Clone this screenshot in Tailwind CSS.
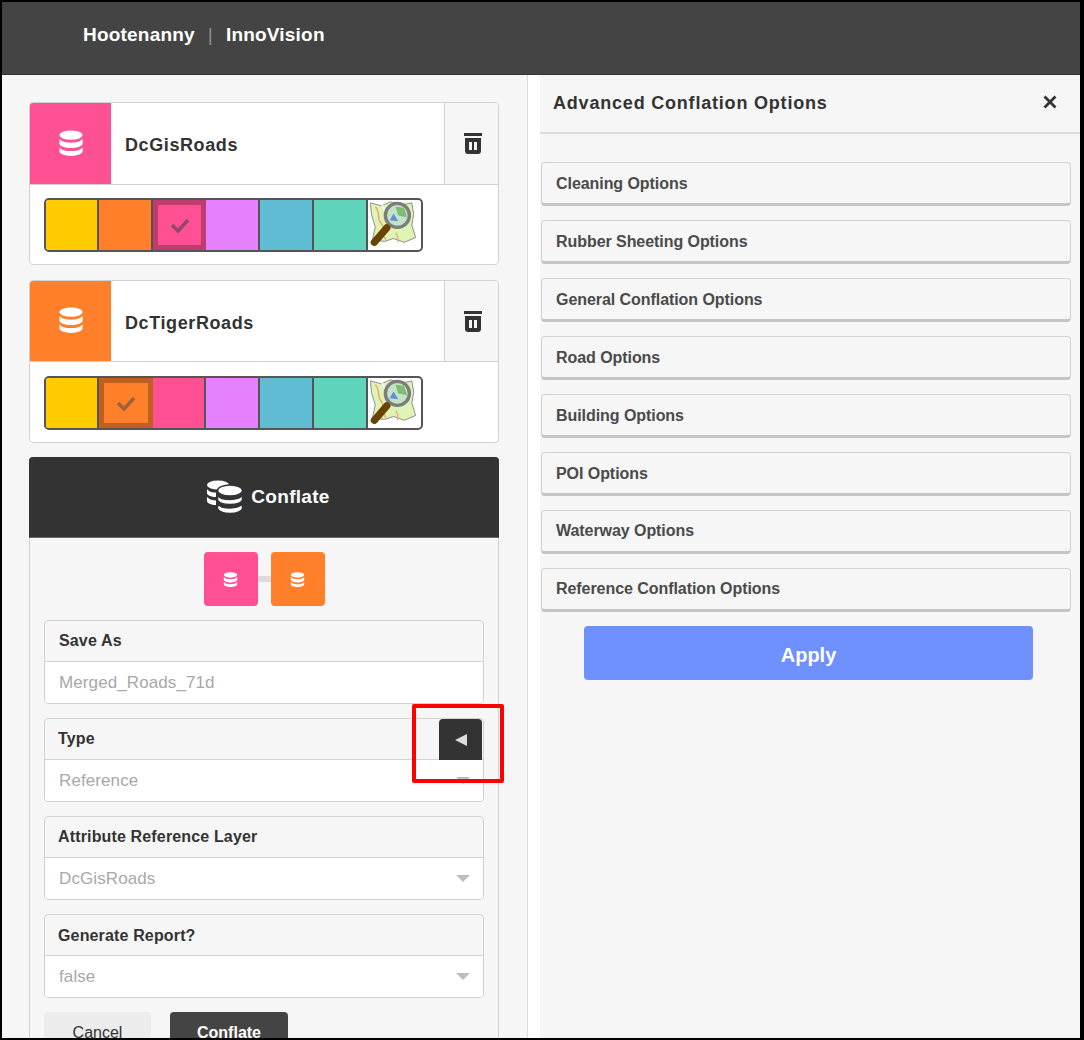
<!DOCTYPE html>
<html lang="en">
<head>
  <meta charset="UTF-8" />
  <title>Hootenanny | InnoVision</title>
  <script src="https://cdn.jsdelivr.net/npm/@tailwindcss/browser@4"></script>
</head>
<body class="bg-black font-['Liberation_Sans',Arial,sans-serif]">
  <svg class="hidden">
    <symbol id="db" viewBox="0 0 28 28">
      <ellipse cx="14" cy="5.500" rx="12.500" ry="5" fill="currentColor"/>
      <path d="M1.500 9.500c2 3 7 4.200 12.500 4.200s10.500-1.200 12.500-4.200v5c0 2.800-5.600 5-12.500 5s-12.500-2.200-12.500-5z" fill="currentColor"/>
      <path d="M1.500 18.500c2 3 7 4.200 12.500 4.200s10.500-1.200 12.500-4.200v4.500c0 2.800-5.600 5-12.500 5s-12.500-2.200-12.500-5z" fill="currentColor"/>
    </symbol>
    <symbol id="osm" viewBox="0 0 54 52">
      <path d="M2 3l11 3 10-4 12 3 10-2 2 12-2 11 4 13-12 5-11-4-9 3-13-1 3-14-4-13z" fill="#dff3b4" stroke="#8a8a8a" stroke-width="1"/>
      <path d="M7 7c6 6 1 12 6 17s-1 10 5 17" fill="none" stroke="#e8a878" stroke-width="1.500"/>
      <path d="M28 34c3 3 3 6 2 10" fill="none" stroke="#e8b088" stroke-width="1.500"/>
      <path d="M14 4c1 6 4 9 7 12" fill="none" stroke="#f4f4f4" stroke-width="2"/>
      <circle cx="30" cy="16" r="12.500" fill="#c4e3c6" stroke="#7d7d7d" stroke-width="3.500"/>
      <path d="M28 7l9 1 3 10-9-2z" fill="#7cbd74"/>
      <path d="M22 21l4-7 5 8z" fill="#5f8fd8"/>
      <path d="M19 29L6 44" stroke="#6b4300" stroke-width="7.500" stroke-linecap="round"/>
    </symbol>
    <symbol id="trash" viewBox="0 0 18 21">
      <path d="M0 0h18v3H0zM1 5h16v13a3 3 0 0 1-3 3H4a3 3 0 0 1-3-3zM5 9v8h3V9zm5 0v8h3V9z" fill="#333" fill-rule="evenodd"/>
    </symbol>
  </svg>

  <div class="m-[2px] w-[1078px] h-[1036px] bg-[#f6f6f6] flex flex-col overflow-hidden relative">
    <header class="h-[73px] shrink-0 bg-[#444444] border-b border-[#333] flex items-center pl-[81px] pb-[5px] text-white font-bold text-[19px] tracking-[0.2px]">
      <span>Hootenanny</span><span class="mx-[13px] font-normal text-[#8f8f8f]">|</span><span>InnoVision</span>
    </header>

    <main class="flex flex-1 min-h-0">
      <!-- left column -->
      <section class="w-[526px] shrink-0 border-r border-[#dcdcdc] pl-[27px] pr-[28px] pt-[27px] flex flex-col gap-[14px]">
        <div class="h-[163px] mb-px shrink-0 bg-white border border-[#d2d2d2] rounded-[4px] overflow-hidden">
          <div class="h-[82px] flex border-b border-[#d2d2d2]">
            <div class="w-[81px] bg-[#ff5094] text-white flex items-center justify-center pb-[2px]"><svg class="w-[26px] h-[28px]"><use href="#db"/></svg></div>
            <div class="flex-1 flex items-center pl-[14px] pt-[3px] text-[18px] font-bold text-[#333] tracking-[0.6px]">DcGisRoads</div>
            <div class="w-[54px] bg-[#f6f6f6] border-l border-[#d2d2d2] flex items-center justify-center pl-[2px]">
              <svg class="w-[18px] h-[21px]"><use href="#trash"/></svg>
            </div>
          </div>
          <div class="pt-[13px] pl-[14px]">
            <div class="w-[379px] h-[54px] flex border-2 border-[#555] rounded-[5px] overflow-hidden bg-white">
              <div class="w-[53px] bg-[#ffcc00] border-r-2 border-[#555]"></div>
              <div class="w-[54px] bg-[#ff7f2a] border-r-2 border-[#555]"></div>
              <div class="w-[53px] bg-[#ff5094] border-[5px] border-[#bf3c6f] flex items-center justify-center">
                <svg class="w-[20px] h-[16px]" viewBox="0 0 20 16"><path d="M2 8l6 6L18 3" fill="none" stroke="#8f4a6a" stroke-width="3.500"/></svg>
              </div>
              <div class="w-[54px] bg-[#e580ff] border-r-2 border-[#555]"></div>
              <div class="w-[54px] bg-[#5fbcd3] border-r-2 border-[#555]"></div>
              <div class="w-[54px] bg-[#5fd3bc] border-r-2 border-[#555]"></div>
              <svg class="w-[53px] h-[50px]"><use href="#osm"/></svg>
            </div>
          </div>
        </div>

        <div class="h-[163px] shrink-0 bg-white border border-[#d2d2d2] rounded-[4px] overflow-hidden">
          <div class="h-[81px] flex border-b border-[#d2d2d2]">
            <div class="w-[81px] bg-[#ff7f2a] text-white flex items-center justify-center pb-[2px]"><svg class="w-[26px] h-[28px]"><use href="#db"/></svg></div>
            <div class="flex-1 flex items-center pl-[14px] pt-[4px] text-[18px] font-bold text-[#333] tracking-[0.6px]">DcTigerRoads</div>
            <div class="w-[54px] bg-[#f6f6f6] border-l border-[#d2d2d2] flex items-center justify-center pl-[2px] pt-px">
              <svg class="w-[18px] h-[21px]"><use href="#trash"/></svg>
            </div>
          </div>
          <div class="pt-[14px] pl-[14px]">
            <div class="w-[379px] h-[54px] flex border-2 border-[#555] rounded-[5px] overflow-hidden bg-white">
              <div class="w-[53px] bg-[#ffcc00] border-r-2 border-[#555]"></div>
              <div class="w-[54px] bg-[#ff7f2a] border-[5px] border-[#bf5f20] flex items-center justify-center">
                <svg class="w-[20px] h-[16px]" viewBox="0 0 20 16"><path d="M2 8l6 6L18 3" fill="none" stroke="#9c6238" stroke-width="3.500"/></svg>
              </div>
              <div class="w-[53px] bg-[#ff5094] border-r-2 border-[#555]"></div>
              <div class="w-[54px] bg-[#e580ff] border-r-2 border-[#555]"></div>
              <div class="w-[54px] bg-[#5fbcd3] border-r-2 border-[#555]"></div>
              <div class="w-[54px] bg-[#5fd3bc] border-r-2 border-[#555]"></div>
              <svg class="w-[53px] h-[50px]"><use href="#osm"/></svg>
            </div>
          </div>
        </div>

        <div class="flex-1 border-x border-[#d2d2d2] rounded-t-[4px] flex flex-col">
          <div class="h-[81px] -mx-px shrink-0 bg-[#333333] rounded-t-[4px] border-b border-[#666] flex items-center justify-center gap-[8px] pl-[8px] text-white font-bold text-[19px] tracking-[0.3px]">
            <svg class="w-[37px] h-[34px]" viewBox="0 0 37 34">
              <g fill="#fff">
                <ellipse cx="12" cy="5" rx="11" ry="4.500"/>
                <path d="M1 9c2 3 6 3.500 9 3.500V17c-5 0-9-2-9-4zM1 17c2 2.500 6 3.500 9 3.500V25c-5 0-9-2-9-4z"/>
              </g>
              <g fill="#fff" stroke="#333" stroke-width="1.500">
                <ellipse cx="24" cy="10.500" rx="12.500" ry="5.500"/>
                <path d="M11.500 15c2 3 7 4.500 12.500 4.500s10.500-1.500 12.500-4.500v4.500c0 3-5.600 5-12.500 5s-12.500-2-12.500-5z"/>
                <path d="M11.500 23.500c2 3 7 4.500 12.500 4.500s10.500-1.500 12.500-4.500V28c0 3-5.600 5.500-12.500 5.500S11.500 31 11.500 28z"/>
              </g>
            </svg>
            <span class="pt-px">Conflate</span>
          </div>

          <div class="pt-[14px] px-[14px] flex flex-col">
            <div class="flex items-center justify-center mb-[14px]">
              <div class="w-[54px] h-[54px] rounded-[4px] bg-[#ff5094] text-white flex items-center justify-center"><svg class="w-[15px] h-[17px]"><use href="#db"/></svg></div>
              <div class="w-[13px] h-[6px] bg-[#dcdcdc]"></div>
              <div class="w-[54px] h-[54px] rounded-[4px] bg-[#ff7f2a] text-white flex items-center justify-center"><svg class="w-[15px] h-[17px]"><use href="#db"/></svg></div>
            </div>

            <div class="flex flex-col gap-[14px]">
              <div class="h-[84px] border border-[#d2d2d2] rounded-[4px] overflow-hidden">
                <div class="h-[41px] border-b border-[#d2d2d2] flex items-center pl-[14px] font-bold text-[16px] text-[#333] tracking-[0.15px]">Save As</div>
                <div class="h-[41px] bg-white flex items-center pl-[14px] text-[17px] text-[#a8a8a8] tracking-[0.1px]">Merged_Roads_71d</div>
              </div>
              <div class="h-[84px] border border-[#d2d2d2] rounded-[4px] overflow-hidden">
                <div class="h-[41px] border-b border-[#d2d2d2] flex items-center pl-[13px] font-bold text-[16px] text-[#333] tracking-[0.15px]">Type</div>
                <div class="h-[41px] bg-white flex items-center justify-between pl-[14px] pr-[13px] text-[17px] text-[#a8a8a8] tracking-[0.1px]">Reference<span class="w-0 h-0 border-x-[7px] border-t-[7px] border-x-transparent border-t-[#bdbdbd]"></span></div>
              </div>
              <div class="h-[84px] border border-[#d2d2d2] rounded-[4px] overflow-hidden">
                <div class="h-[41px] border-b border-[#d2d2d2] flex items-center pl-[13px] font-bold text-[16px] text-[#333] tracking-[0.15px]">Attribute Reference Layer</div>
                <div class="h-[41px] bg-white flex items-center justify-between pl-[14px] pr-[13px] text-[17px] text-[#a8a8a8] tracking-[0.1px]">DcGisRoads<span class="w-0 h-0 border-x-[7px] border-t-[7px] border-x-transparent border-t-[#bdbdbd]"></span></div>
              </div>
              <div class="h-[84px] border border-[#d2d2d2] rounded-[4px] overflow-hidden">
                <div class="h-[41px] pt-px border-b border-[#d2d2d2] flex items-center pl-[13px] font-bold text-[16px] text-[#333] tracking-[0.15px]">Generate Report?</div>
                <div class="h-[41px] bg-white flex items-center justify-between pl-[14px] pr-[13px] text-[17px] text-[#a8a8a8] tracking-[0.1px]">false<span class="w-0 h-0 border-x-[7px] border-t-[7px] border-x-transparent border-t-[#bdbdbd]"></span></div>
              </div>
            </div>

            <div class="flex gap-[19px] mt-[14px]">
              <div class="w-[107px] h-[40px] pt-px rounded-[4px] bg-[#ececec] flex items-center justify-center text-[16px] text-[#333]">Cancel</div>
              <div class="w-[118px] h-[40px] pt-px rounded-[4px] bg-[#444444] flex items-center justify-center text-[16px] font-bold text-white">Conflate</div>
            </div>
          </div>
        </div>
      </section>

      <!-- white gutter -->
      <div class="w-[12px] shrink-0 bg-white"></div>

      <!-- advanced options -->
      <aside class="flex-1 flex flex-col">
        <div class="h-[59px] shrink-0 border-b-2 border-[#dcdcdc] flex items-center justify-between pl-[13px] pr-[23px] font-bold text-[18px] text-[#333] tracking-[0.8px]">
          <span>Advanced Conflation Options</span>
          <svg class="w-[14px] h-[14px] mb-[4px]" viewBox="0 0 14 14"><path d="M1.500 1.500l11 11M12.500 1.500l-11 11" stroke="#333" stroke-width="2.800"/></svg>
        </div>
        <div class="pt-[28px] pl-px pr-[9px] flex flex-col gap-[14px]">
          <div class="h-[44px] pt-px border border-[#d2d2d2] border-b-[3px] border-b-[#c4c4c4] rounded-[4px] flex items-center pl-[14px] font-bold text-[16px] text-[#4a4a4a] tracking-[-0.06px]">Cleaning Options</div>
          <div class="h-[44px] pt-px border border-[#d2d2d2] border-b-[3px] border-b-[#c4c4c4] rounded-[4px] flex items-center pl-[14px] font-bold text-[16px] text-[#4a4a4a] tracking-[-0.06px]">Rubber Sheeting Options</div>
          <div class="h-[44px] pt-px border border-[#d2d2d2] border-b-[3px] border-b-[#c4c4c4] rounded-[4px] flex items-center pl-[14px] font-bold text-[16px] text-[#4a4a4a] tracking-[-0.06px]">General Conflation Options</div>
          <div class="h-[44px] pt-px border border-[#d2d2d2] border-b-[3px] border-b-[#c4c4c4] rounded-[4px] flex items-center pl-[14px] font-bold text-[16px] text-[#4a4a4a] tracking-[-0.06px]">Road Options</div>
          <div class="h-[44px] pt-px border border-[#d2d2d2] border-b-[3px] border-b-[#c4c4c4] rounded-[4px] flex items-center pl-[14px] font-bold text-[16px] text-[#4a4a4a] tracking-[-0.06px]">Building Options</div>
          <div class="h-[44px] pt-px border border-[#d2d2d2] border-b-[3px] border-b-[#c4c4c4] rounded-[4px] flex items-center pl-[14px] font-bold text-[16px] text-[#4a4a4a] tracking-[-0.06px]">POI Options</div>
          <div class="h-[44px] border border-[#d2d2d2] border-b-[3px] border-b-[#c4c4c4] rounded-[4px] flex items-center pl-[14px] font-bold text-[16px] text-[#4a4a4a] tracking-[-0.06px]">Waterway Options</div>
          <div class="h-[44px] border border-[#d2d2d2] border-b-[3px] border-b-[#c4c4c4] rounded-[4px] flex items-center pl-[14px] font-bold text-[16px] text-[#4a4a4a] tracking-[-0.06px]">Reference Conflation Options</div>
        </div>
        <div class="mt-[14px] ml-[44px] w-[449px] h-[54px] pt-[3px] bg-[#6e91ff] rounded-[4px] flex items-center justify-center font-bold text-[20px] text-white">Apply</div>
      </aside>
    </main>

    <!-- callout over the Type field -->
    <div class="absolute left-[437px] top-[717px] w-[43px] h-[41px] bg-[#333333] rounded-t-[4px] flex items-center justify-center">
      <span class="w-0 h-0 border-y-[6px] border-r-[12px] border-y-transparent border-r-[#d8dde2]"></span>
    </div>
    <div class="absolute left-[410px] top-[702px] w-[92px] h-[79px] border-[4px] border-[#ff0000] rounded-[2px]"></div>
  </div>
</body>
</html>
